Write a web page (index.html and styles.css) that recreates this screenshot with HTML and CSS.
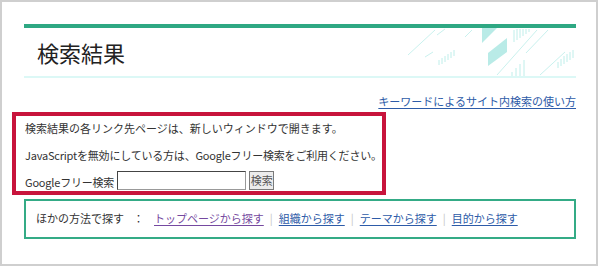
FILE: index.html
```html
<!DOCTYPE html>
<html lang="ja">
<head>
<meta charset="utf-8">
<title>検索結果</title>
<link rel="stylesheet" href="styles.css">
</head>
<body>
<div class="frame">
  <div class="header">
    <h1 class="title">検索結果</h1>
    <svg class="deco" width="168" height="48" viewBox="0 0 168 48" aria-hidden="true">
      <g stroke="#c9f1ee" stroke-width="1" fill="none">
        <line x1="0" y1="27" x2="27" y2="2"/>
        <line x1="17" y1="29" x2="25" y2="24"/>
        <line x1="29" y1="7" x2="37" y2="1"/>
        <line x1="57" y1="9" x2="64" y2="2"/>
        <line x1="89" y1="47" x2="129" y2="2"/>
        <line x1="132" y1="47" x2="157" y2="24"/>
        <line x1="118" y1="25" x2="140" y2="2"/>
      </g>
      <g stroke="#bfeeea" stroke-width="1">
        <line x1="31" y1="37" x2="31" y2="32"/>
        <line x1="34" y1="36" x2="34" y2="30"/>
        <line x1="37" y1="34" x2="37" y2="28"/>
        <line x1="40" y1="32" x2="40" y2="26"/>
        <line x1="43" y1="30" x2="43" y2="24"/>
        <line x1="46" y1="28" x2="46" y2="22"/>
        <line x1="106" y1="14" x2="106" y2="2"/>
        <line x1="109" y1="12" x2="109" y2="1"/>
        <line x1="112" y1="10" x2="112" y2="1"/>
        <line x1="115" y1="8" x2="115" y2="1"/>
        <line x1="118" y1="6" x2="118" y2="1"/>
        <line x1="121" y1="4" x2="121" y2="1"/>
        <line x1="104" y1="48" x2="104" y2="44"/>
        <line x1="108" y1="48" x2="108" y2="40"/>
        <line x1="112" y1="48" x2="112" y2="36"/>
        <line x1="116" y1="48" x2="116" y2="32"/>
        <line x1="150" y1="40" x2="150" y2="34"/>
        <line x1="153" y1="38" x2="153" y2="31"/>
        <line x1="156" y1="36" x2="156" y2="28"/>
        <line x1="159" y1="34" x2="159" y2="26"/>
        <line x1="162" y1="32" x2="162" y2="24"/>
        <line x1="165" y1="30" x2="165" y2="22"/>
      </g>
      <polygon points="74,0 89,0 74,15" fill="#b9ebe7"/>
      <polygon points="80,38 80,25 99,10 99,24" fill="#b9ebe7"/>
    </svg>
  </div>
  <div class="helprow"><a href="#" class="link">キーワードによるサイト内検索の使い方</a></div>
  <div class="notice">
    <p class="line">検索結果の各リンク先ページは、新しいウィンドウで開きます。</p>
    <p class="line line2">JavaScriptを無効にしている方は、Googleフリー検索をご利用ください。</p>
    <form class="searchrow">
      <label class="label" for="q">Googleフリー検索</label>
      <input class="field" id="q" type="text">
      <button class="btn" type="button">検索</button>
    </form>
  </div>
  <div class="other">
    <span class="otherlabel">ほかの方法で探す</span>
    <span class="colon">：</span>
    <a href="#" class="link visited">トップページから探す</a>
    <span class="sep">|</span>
    <a href="#" class="link">組織から探す</a>
    <span class="sep">|</span>
    <a href="#" class="link">テーマから探す</a>
    <span class="sep">|</span>
    <a href="#" class="link">目的から探す</a>
  </div>
</div>
</body>
</html>
```

FILE: styles.css
```css
html, body {
  margin: 0;
  padding: 0;
  background: #fff;
}
body {
  font-family: "Noto Sans CJK JP", "Noto Sans", sans-serif;
  font-size: 11px;
  color: #333;
}
.frame {
  box-sizing: border-box;
  width: 598px;
  height: 266px;
  border: 2px solid #cfcfcf;
  padding: 22px 0 0 10px;
  overflow: hidden;
}
.header {
  position: relative;
  box-sizing: border-box;
  width: 552px;
  height: 54px;
  margin-left: 12px;
  border-top: 4px solid #2ea883;
  border-bottom: 2px solid #dcf8f6;
}
.title {
  margin: 0;
  padding-left: 13px;
  font-size: 22px;
  font-weight: normal;
  line-height: 48px;
  color: #222;
}
.deco {
  position: absolute;
  right: 0;
  top: 0;
}
.helprow {
  width: 552px;
  margin: 15px 0 0 12px;
  text-align: right;
  line-height: 16px;
}
.link {
  color: #2d5ba8;
  text-decoration: underline;
  text-underline-offset: 2px;
}
.link.visited {
  color: #7549a0;
}
.notice {
  box-sizing: border-box;
  width: 374px;
  margin-top: 3px;
  border: 4px solid #c8143c;
  padding: 4px 0 1px 9px;
}
.line {
  margin: 0;
  line-height: 16px;
  white-space: nowrap;
}
.line2 {
  margin-top: 11px;
  letter-spacing: -0.2px;
}
.searchrow {
  display: flex;
  align-items: center;
  height: 19px;
  margin: 8px 0 0;
}
.label {
  line-height: 16px;
  padding-top: 3px;
  white-space: nowrap;
  letter-spacing: -0.2px;
}
.field {
  box-sizing: border-box;
  width: 129px;
  height: 19px;
  margin: 0 0 0 3px;
  padding: 0 2px;
  border: 1px solid #444;
  border-right-color: #999;
  border-bottom-color: #999;
  background: #fff;
  font: inherit;
}
.btn {
  box-sizing: border-box;
  width: 25px;
  height: 19px;
  margin: 0 0 0 3px;
  padding: 0;
  border: 1px solid #7a7a7a;
  background: #ececec;
  font: inherit;
  font-size: 11px;
  color: #555;
  line-height: 17px;
}
.other {
  box-sizing: border-box;
  display: flex;
  align-items: center;
  width: 552px;
  height: 40px;
  margin: 4px 0 0 12px;
  border: 2px solid #34ab86;
  padding: 0 0 2px 10px;
  line-height: 16px;
}
.colon {
  margin-left: 9px;
  margin-right: 10px;
}
.sep {
  color: #c4c4c4;
  margin: 0 6px;
}
```
